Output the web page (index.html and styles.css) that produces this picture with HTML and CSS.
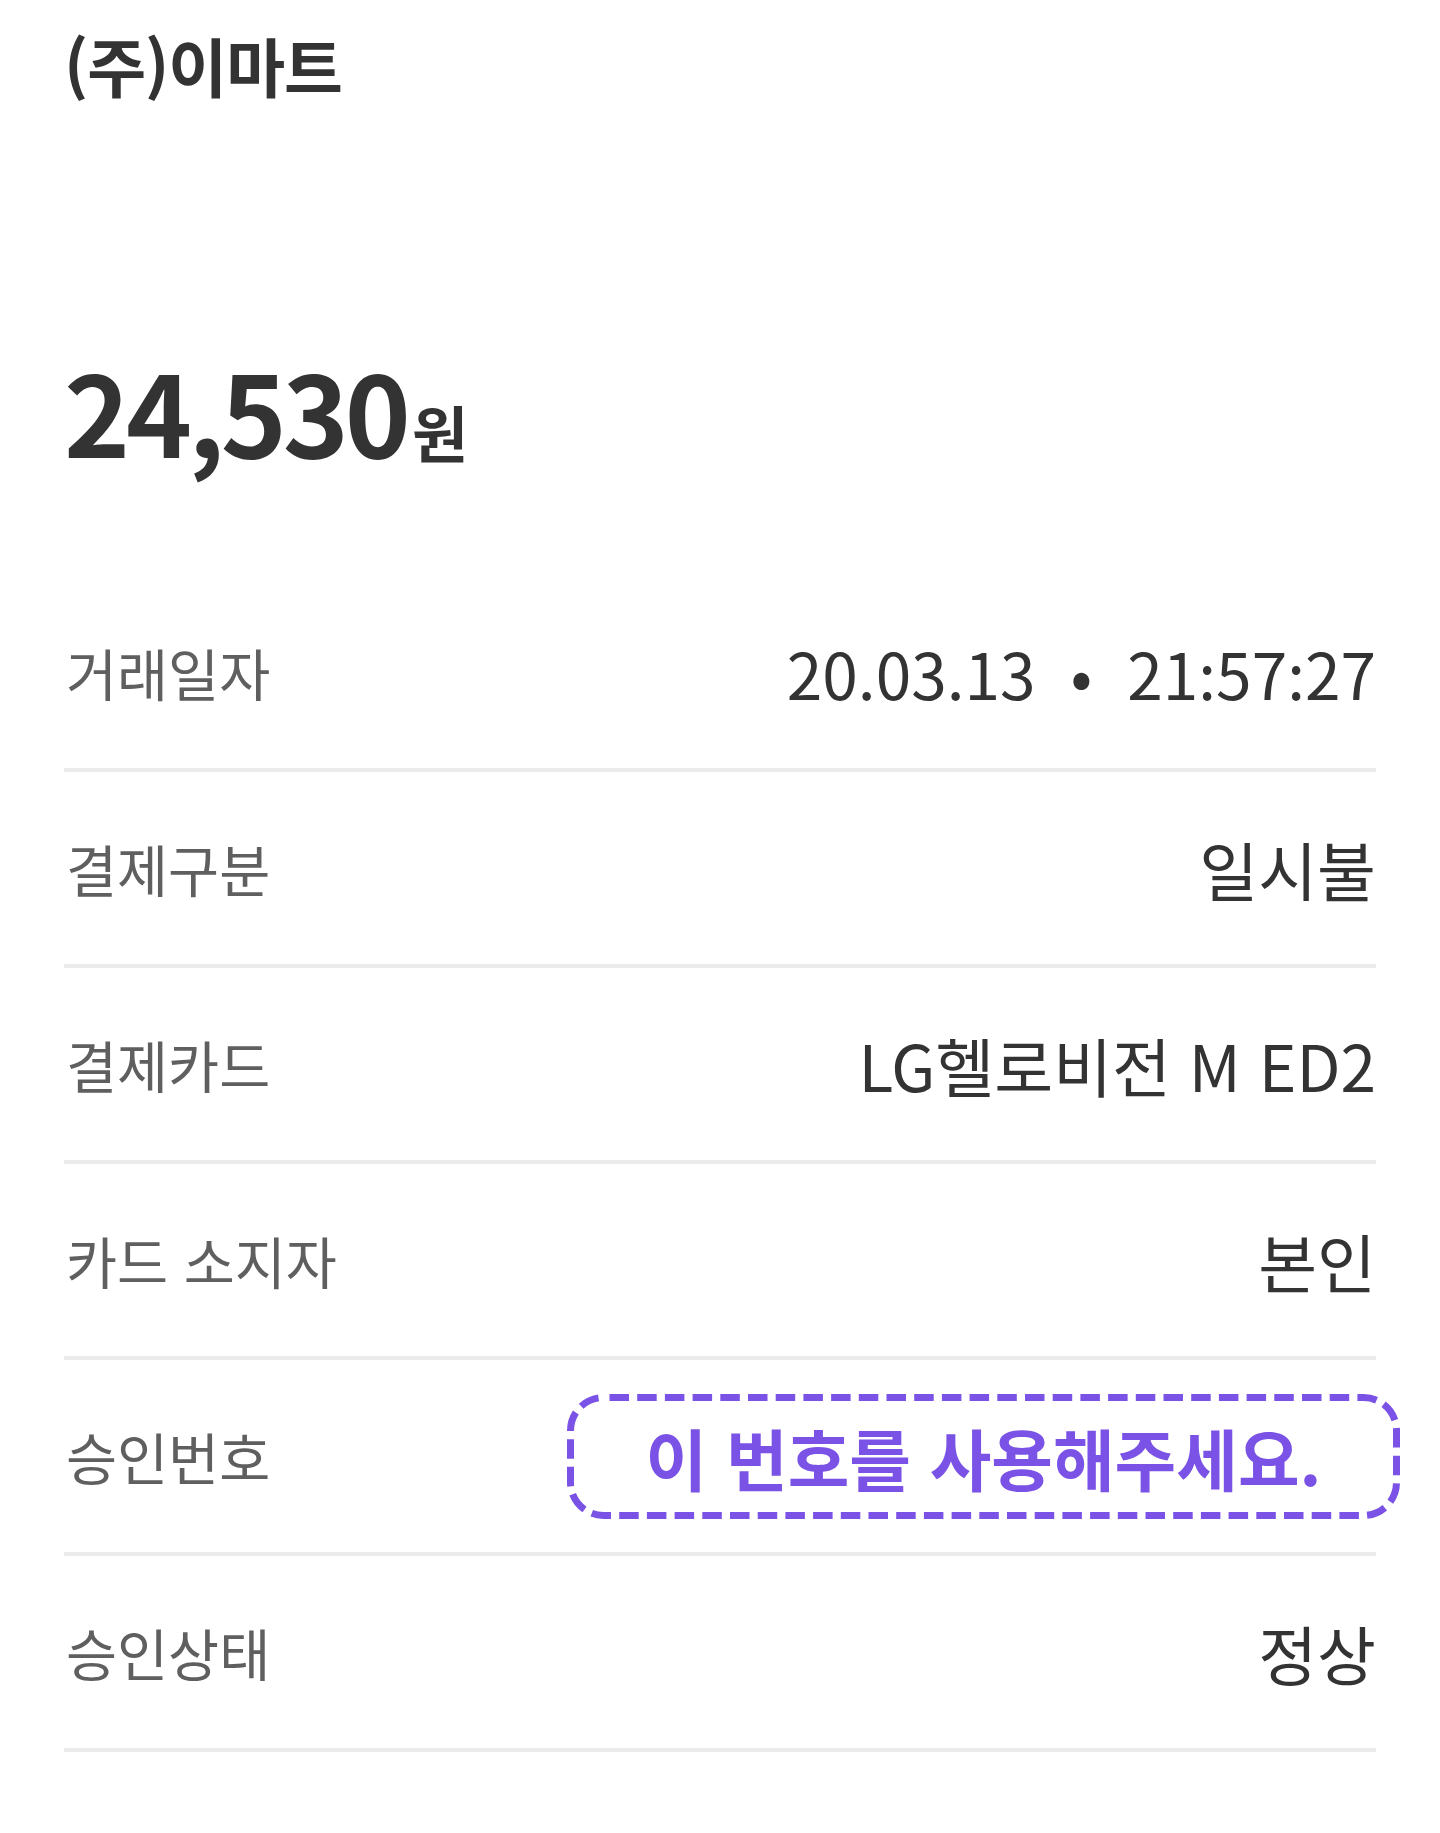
FILE: index.html
```html
<!DOCTYPE html>
<html lang="ko">
<head>
<meta charset="utf-8">
<title>(주)이마트</title>
<link rel="stylesheet" href="styles.css">
</head>
<body>
<main class="page">
  <h1 class="merchant">(주)이마트</h1>
  <div class="amount"><span class="amount-num">24,530</span><span class="amount-unit">원</span></div>
  <ul class="details">
    <li class="row"><span class="label">거래일자</span><span class="value">20.03.13<span class="dot">•</span>21:57:27</span></li>
    <li class="row"><span class="label">결제구분</span><span class="value">일시불</span></li>
    <li class="row"><span class="label">결제카드</span><span class="value">LG헬로비전 M ED2</span></li>
    <li class="row"><span class="label">카드 소지자</span><span class="value">본인</span></li>
    <li class="row"><span class="label">승인번호</span><span class="notice"><svg class="notice-frame" width="833" height="125" viewBox="0 0 833 125" aria-hidden="true"><rect x="3.5" y="3.5" width="826" height="118" rx="33" ry="33" fill="none" stroke="#7a52e6" stroke-width="7" stroke-dasharray="19.5 8.2" stroke-dashoffset="-6"/></svg><span class="notice-text">이 번호를 사용해주세요.</span></span></li>
    <li class="row"><span class="label">승인상태</span><span class="value">정상</span></li>
  </ul>
</main>
</body>
</html>
```
FILE: styles.css
```css
html, body {
  margin: 0;
  padding: 0;
  background: #ffffff;
}
body {
  font-family: "Noto Sans CJK KR", "Noto Sans", sans-serif;
  color: #333333;
}
.page {
  padding: 0 64px;
}
.merchant {
  margin: 0;
  height: 128px;
  line-height: 128px;
  font-size: 64px;
  font-weight: 700;
  color: #333333;
  letter-spacing: -1px;
}
.amount {
  margin-top: 181px;
  height: 200px;
  display: flex;
  align-items: baseline;
  line-height: 200px;
  color: #333333;
  font-weight: 700;
}
.amount-num {
  font-size: 112px;
  letter-spacing: -4px;
}
.amount-unit {
  font-size: 61px;
  margin-left: 5px;
}
.details {
  list-style: none;
  margin: 67px 0 0 0;
  padding: 0;
}
.row {
  height: 192px;
  border-bottom: 4px solid #ebebeb;
  display: flex;
  align-items: center;
  justify-content: space-between;
}
.label {
  font-size: 55.5px;
  color: #5f5f5f;
  padding-left: 2px;
}
.value {
  font-size: 64px;
  color: #333333;
}
.dot {
  margin: 0 35px;
}
.notice {
  position: relative;
  box-sizing: border-box;
  width: 833px;
  height: 125px;
  margin-right: -24px;
  display: flex;
  align-items: center;
  justify-content: center;
}
.notice-frame {
  position: absolute;
  left: 0;
  top: 0;
}
.notice-text {
  font-size: 67px;
  font-weight: 700;
  color: #7a52e6;
}
```
